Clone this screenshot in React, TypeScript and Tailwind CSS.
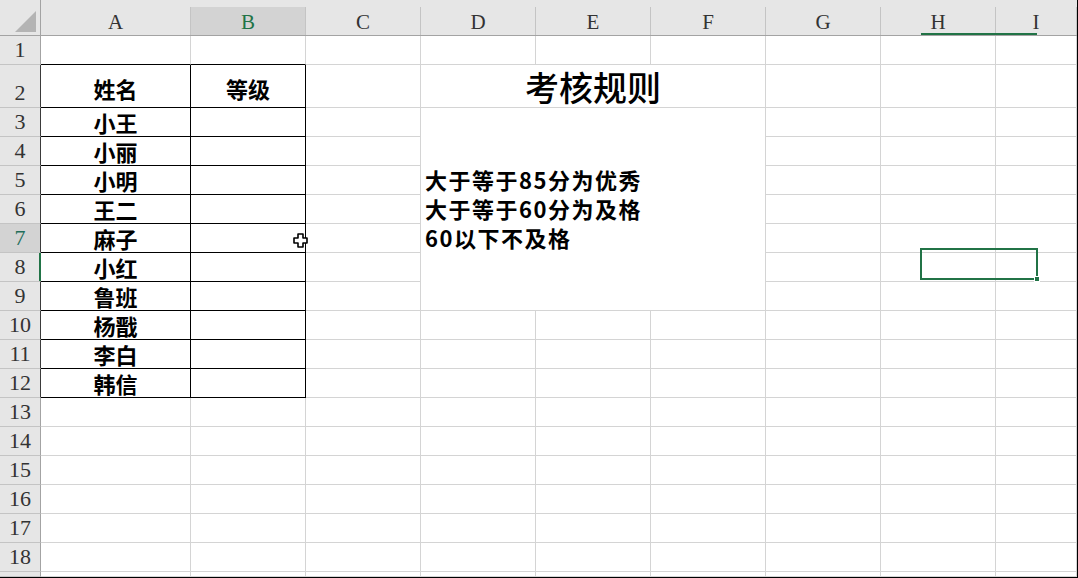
import React from 'react'

const columns = ['A', 'B', 'C', 'D', 'E', 'F', 'G', 'H', 'I']
const rowNumbers = Array.from({ length: 19 }, (_, i) => i + 1)

const names: Record<number, string> = {
    3: '小王',
    4: '小丽',
    5: '小明',
    6: '王二',
    7: '麻子',
    8: '小红',
    9: '鲁班',
    10: '杨戬',
    11: '李白',
    12: '韩信'
}

const rules = ['大于等于85分为优秀', '大于等于60分为及格', '60以下不及格']

const cjk = "font-['Noto_Sans_CJK_SC',sans-serif]"

function ColumnHeader({ label, active }: { label: string; active: boolean }) {
    return (
        <div className={`flex flex-col border-b border-[#a3a3a3] ${active ? 'bg-[#d3d3d3]' : 'bg-[#e6e6e6]'}`}>
            <div className="h-[7px] bg-[#e6e6e6]" />
            <div
                className={`flex flex-1 items-center justify-center border-r border-[#c4c4c4] pt-[2px] font-['Liberation_Serif',serif] text-[21px] leading-none ${
                    active ? 'text-[#217346]' : 'text-[#333]'
                }`}
            >
                {label}
            </div>
        </div>
    )
}

function RowHeader({ n }: { n: number }) {
    const active = n === 7
    const tableRow = n >= 2 && n <= 12
    return (
        <div
            className={`flex items-center justify-center border-b border-r font-['Liberation_Serif',serif] text-[22px] leading-none ${
                active ? 'bg-[#d3d3d3] text-[#1f6e5a]' : 'bg-[#e6e6e6] text-[#333]'
            } ${tableRow ? 'border-r-[#3a3a3a] border-b-[#c4c4c4]' : 'border-r-[#a3a3a3] border-b-[#c4c4c4]'} ${
                n === 2 ? 'items-end pb-[3px]' : ''
            }`}
        >
            {n < 19 ? n : null}
        </div>
    )
}

function BodyCell({ row, col }: { row: number; col: string }) {
    const inTable = (col === 'A' || col === 'B') && row >= 2 && row <= 12
    const aboveTable = (col === 'A' || col === 'B') && row === 1
    const border = inTable
        ? 'border-r border-b border-black'
        : aboveTable
          ? 'border-r border-b border-r-[#d4d4d4] border-b-black'
          : 'border-r border-b border-[#d4d4d4]'

    if (row === 2 && (col === 'A' || col === 'B')) {
        return (
            <div className={`flex items-end justify-center pb-[6px] bg-white ${border}`}>
                <span className={`${cjk} text-[22px] font-bold leading-[26px] text-black`}>
                    {col === 'A' ? '姓名' : '等级'}
                </span>
            </div>
        )
    }

    if (col === 'A' && names[row]) {
        return (
            <div className={`flex items-center justify-center bg-white ${border}`}>
                <span className={`${cjk} text-[22px] font-bold leading-[26px] text-black`}>{names[row]}</span>
            </div>
        )
    }

    return <div className={`bg-white ${border}`} />
}

export default function App() {
    const cells: React.ReactNode[] = []

    // top-left corner
    cells.push(
        <div key="corner" className="flex items-end justify-end border-b border-r border-[#a3a3a3] bg-[#e6e6e6] pb-[3px] pr-[4px]">
            <svg width="21" height="21" viewBox="0 0 21 21">
                <polygon points="21,0 21,21 0,21" fill="#b4b4b4" />
            </svg>
        </div>
    )
    columns.forEach((c) => cells.push(<ColumnHeader key={`h-${c}`} label={c} active={c === 'B'} />))

    rowNumbers.forEach((r) => {
        cells.push(<RowHeader key={`r-${r}`} n={r} />)
        columns.forEach((c) => {
            const merged = c === 'D' || c === 'E' || c === 'F'
            if (r === 2 && merged) {
                if (c === 'D') {
                    cells.push(
                        <div key="title" className="col-span-3 flex items-center justify-center border-b border-r border-[#d4d4d4] bg-white pt-[1px]">
                            <span className={`${cjk} text-[34px] font-medium leading-none text-black`}>考核规则</span>
                        </div>
                    )
                }
                return
            }
            if (r >= 3 && r <= 9 && merged) {
                if (r === 3 && c === 'D') {
                    cells.push(
                        <div key="rules" className="col-span-3 row-span-7 flex flex-col justify-center border-b border-r border-[#d4d4d4] bg-white pl-[4px] pb-[2px]">
                            {rules.map((line) => (
                                <div key={line} className={`${cjk} whitespace-nowrap text-[22px] font-bold leading-[29px] tracking-[1.5px] text-black`}>
                                    {line}
                                </div>
                            ))}
                        </div>
                    )
                }
                return
            }
            cells.push(<BodyCell key={`${c}${r}`} row={r} col={c} />)
        })
    })

    return (
        <div className="relative h-[578px] w-[1078px] overflow-hidden border-b border-r border-black bg-white">
            <div className="grid h-full grid-cols-[41px_150px_115px_115px_115px_115px_115px_115px_115px_1fr] grid-rows-[36px_29px_43px_repeat(16,29px)_1fr]">
                {cells}
            </div>

            {/* green underline below column header */}
            <div className="absolute left-[921px] top-[33px] h-[2px] w-[116px] bg-[#217346]" />
            {/* green marker on row 8 header */}
            <div className="absolute left-[39px] top-[253px] h-[28px] w-[2px] bg-[#217346]" />

            {/* active cell selection */}
            <div className="absolute left-[920px] top-[248px] h-[32px] w-[118px] border-2 border-[#217346]">
                <div className="absolute -bottom-[4px] -right-[4px] h-[6px] w-[6px] border border-white bg-[#217346]" />
            </div>

            {/* mouse cursor */}
            <svg className="absolute left-[293px] top-[233px]" width="15" height="15" viewBox="0 0 15 15">
                <path
                    d="M5 1 H10 V5 H14 V10 H10 V14 H5 V10 H1 V5 H5 Z"
                    fill="white"
                    stroke="black"
                    strokeWidth="1.6"
                    strokeLinejoin="round"
                />
            </svg>
        </div>
    )
}
